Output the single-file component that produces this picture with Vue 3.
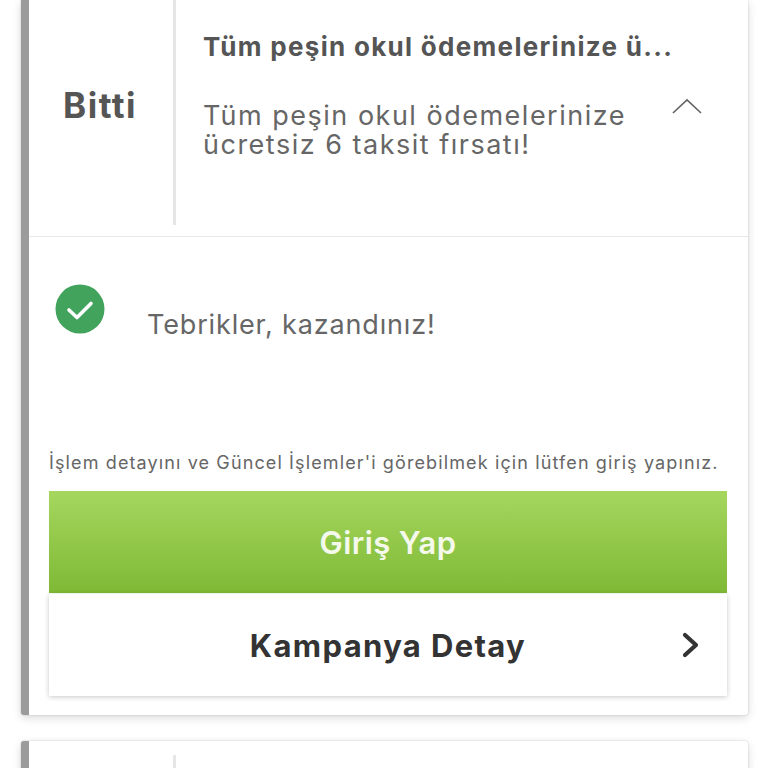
<script setup>
const title = 'Tüm peşin okul ödemelerinize ü...'
</script>

<template>
  <div class="page">
    <section class="card first">
      <div class="head">
        <div class="status"><span>Bitti</span></div>
        <div class="info">
          <h2 class="title">{{ title }}</h2>
          <div class="desc-row">
            <p class="desc">Tüm peşin okul ödemelerinize<br />ücretsiz 6 taksit fırsatı!</p>
            <svg class="up" width="30" height="16" viewBox="0 0 30 16" fill="none">
              <path d="M1 15 L15 2 L29 15" stroke="#666" stroke-width="1.7" />
            </svg>
          </div>
        </div>
      </div>
      <div class="result">
        <svg class="check" width="50" height="50" viewBox="0 0 50 50">
          <circle cx="25" cy="25" r="24.5" fill="#41a35c" />
          <path d="M14 26 L22 33.5 L36 19.5" fill="none" stroke="#fff" stroke-width="3.6" stroke-linecap="round" stroke-linejoin="round" />
        </svg>
        <p class="result-text">Tebrikler, kazandınız!</p>
      </div>
      <div class="login">
        <p class="note">İşlem detayını ve Güncel İşlemler'i görebilmek için lütfen giriş yapınız.</p>
        <button class="primary">Giriş Yap</button>
        <div class="detail">
          <span class="detail-label">Kampanya Detay</span>
          <svg class="chev" width="18" height="26" viewBox="0 0 18 26" fill="none">
            <path d="M3 3 L14 13 L3 23" stroke="#333" stroke-width="4.2" stroke-linecap="round" stroke-linejoin="round" />
          </svg>
        </div>
      </div>
    </section>
    <section class="card next">
      <div class="stub"><div class="stub-line"></div></div>
    </section>
  </div>
</template>

<style>
html, body { margin: 0; background: #fff; overflow: hidden; }
</style>

<style scoped>
.page {
  width: 768px;
  height: 768px;
  overflow: hidden;
  box-sizing: border-box;
  padding: 0 20px 0 21px;
  background: #fff;
  font-family: Inter, "Noto Sans", sans-serif;
}
.card {
  background: #fff;
  border-left: 8px solid #9b9b9b;
  border-radius: 3px;
  box-shadow: 0 3px 10px rgba(0, 0, 0, 0.14), 0 0 2px rgba(0, 0, 0, 0.2);
}
.first {
  border-radius: 0 0 3px 3px;
}
.head {
  display: flex;
  height: 236px;
  border-bottom: 1px solid #e8e8e8;
}
.status {
  width: 144px;
  height: 225px;
  flex: none;
  border-right: 3px solid #e6e6e6;
  display: flex;
  align-items: center;
  justify-content: center;
}
.status span {
  font-size: 35px;
  font-weight: 700;
  letter-spacing: 1.5px;
  color: #555;
  margin: -15px 2px 0 0;
}
.info {
  flex: 1;
  padding: 32px 0 0 27px;
}
.title {
  margin: 0;
  font-size: 26px;
  line-height: 30px;
  font-weight: 700;
  letter-spacing: 1.3px;
  color: #555;
  white-space: nowrap;
}
.desc-row {
  display: flex;
  justify-content: space-between;
  margin-top: 39px;
}
.desc {
  margin: 0;
  font-size: 27px;
  line-height: 29px;
  letter-spacing: 1.5px;
  color: #666;
}
.up {
  margin: -3px 46px 0 0;
}
.result {
  display: flex;
  height: 143px;
  box-sizing: border-box;
  padding: 47px 0 0 26px;
}
.check {
  flex: none;
}
.result-text {
  margin: 25px 0 0 42px;
  font-size: 27px;
  line-height: 32px;
  letter-spacing: 0.85px;
  color: #666;
}
.login {
  height: 335px;
  box-sizing: border-box;
  padding: 71px 21px 0 20px;
}
.note {
  margin: 0;
  font-size: 18px;
  line-height: 24px;
  letter-spacing: 1.12px;
  color: #666;
  white-space: nowrap;
}
.primary {
  display: block;
  width: 100%;
  height: 102px;
  margin-top: 16px;
  border: 0;
  padding: 0;
  background: linear-gradient(#a5d75f, #7fb935);
  color: #f4f9ec;
  font: 600 31px Inter, "Noto Sans", sans-serif;
  letter-spacing: 0.4px;
}
.detail {
  position: relative;
  height: 102px;
  margin-top: 1px;
  display: flex;
  align-items: center;
  justify-content: center;
  background: #fff;
  box-shadow: 0 1px 5px rgba(0, 0, 0, 0.22);
}
.detail-label {
  font-size: 31px;
  font-weight: 700;
  letter-spacing: 1.35px;
  color: #333;
}
.chev {
  position: absolute;
  right: 27px;
  top: 38px;
}
.next {
  margin-top: 26px;
}
.stub {
  height: 60px;
  padding-top: 14px;
  box-sizing: border-box;
}
.stub-line {
  width: 144px;
  height: 46px;
  border-right: 3px solid #e6e6e6;
}
</style>
